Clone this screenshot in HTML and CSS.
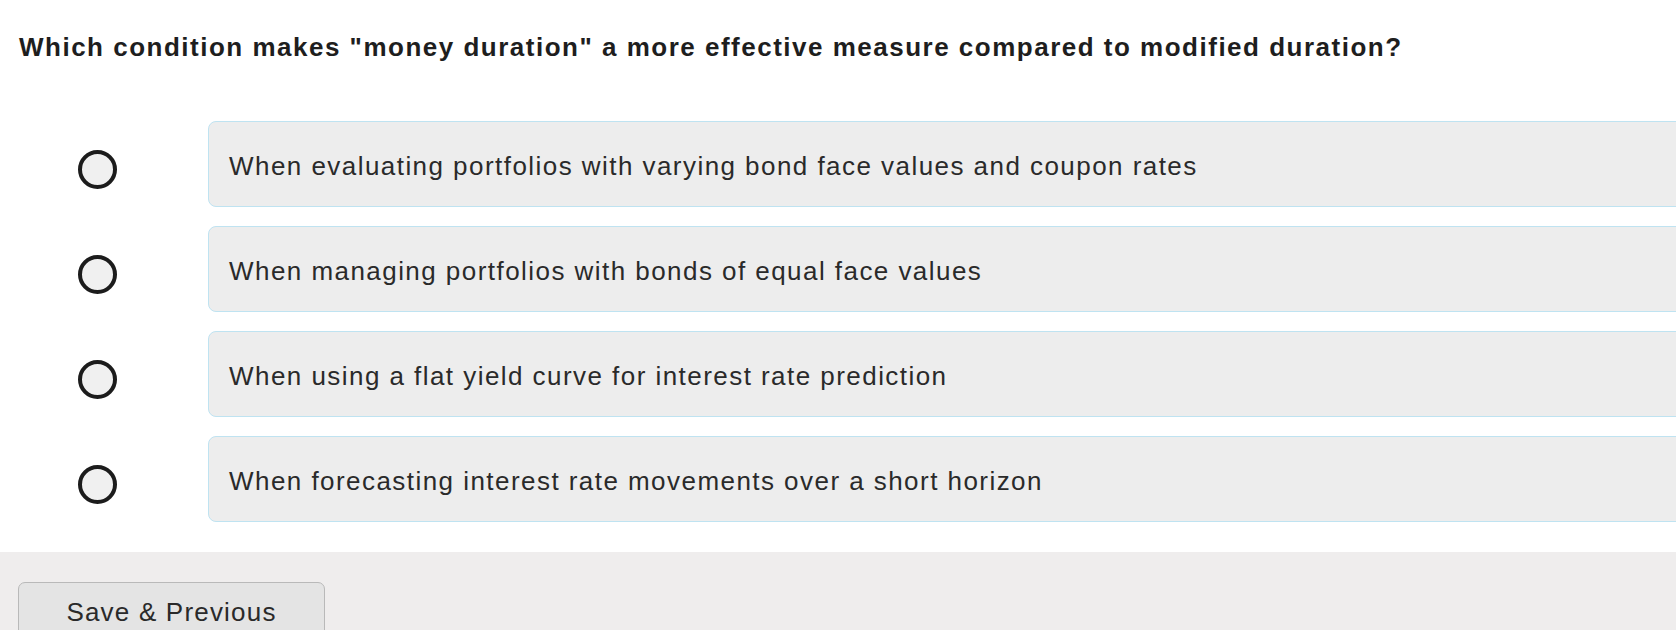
FILE: index.html
```html
<!DOCTYPE html>
<html>
<head>
<meta charset="utf-8">
<link rel="stylesheet" href="styles.css">
</head>
<body>
<div class="page">
  <div class="question">Which condition makes "money duration" a more effective measure compared to modified duration?</div>
  <div class="options">
    <label class="option">
      <span class="radio"></span>
      <span class="box">When evaluating portfolios with varying bond face values and coupon rates</span>
    </label>
    <label class="option">
      <span class="radio"></span>
      <span class="box">When managing portfolios with bonds of equal face values</span>
    </label>
    <label class="option">
      <span class="radio"></span>
      <span class="box">When using a flat yield curve for interest rate prediction</span>
    </label>
    <label class="option">
      <span class="radio"></span>
      <span class="box">When forecasting interest rate movements over a short horizon</span>
    </label>
  </div>
  <div class="footer">
    <button class="btn">Save &amp; Previous</button>
  </div>
</div>
</body>
</html>
```

FILE: styles.css
```css
html, body {
  margin: 0;
  padding: 0;
  background: #ffffff;
  overflow: hidden;
}
body {
  font-family: "Liberation Sans", Arial, sans-serif;
  color: #222222;
}
.page {
  width: 1676px;
  height: 630px;
  overflow: hidden;
}
.question {
  padding: 32px 0 0 19px;
  font-size: 26px;
  font-weight: bold;
  line-height: 30px;
  letter-spacing: 1.5px;
  color: #1e1e1e;
}
.options {
  display: flex;
  flex-direction: column;
  gap: 19px;
  margin-top: 59px;
}
.option {
  display: flex;
  align-items: center;
  padding-left: 78px;
}
.radio {
  flex: none;
  width: 31px;
  height: 31px;
  border: 4px solid #1c1c1c;
  border-radius: 50%;
  background: #f0f0f0;
  margin-right: 91px;
  margin-top: 10px;
}
.box {
  flex: none;
  width: 1600px;
  height: 86px;
  box-sizing: border-box;
  display: flex;
  align-items: center;
  padding: 4px 0 0 20px;
  background: #ededed;
  border: 1.5px solid #bfe3f1;
  border-radius: 8px;
  font-size: 26px;
  color: #2a2a2a;
  letter-spacing: 1.45px;
}
.footer {
  margin-top: 30px;
  background: #efeded;
  height: 120px;
  padding: 30px 0 0 18px;
  box-sizing: border-box;
}
.btn {
  width: 307px;
  box-sizing: border-box;
  background: #e4e4e4;
  border: 1.5px solid #b9b9b9;
  border-radius: 7px;
  font-family: "Liberation Sans", Arial, sans-serif;
  font-size: 26px;
  line-height: 30px;
  letter-spacing: 1.2px;
  color: #2a2a2a;
  padding: 14px 0 20px 0;
  text-align: center;
  display: block;
}
```
